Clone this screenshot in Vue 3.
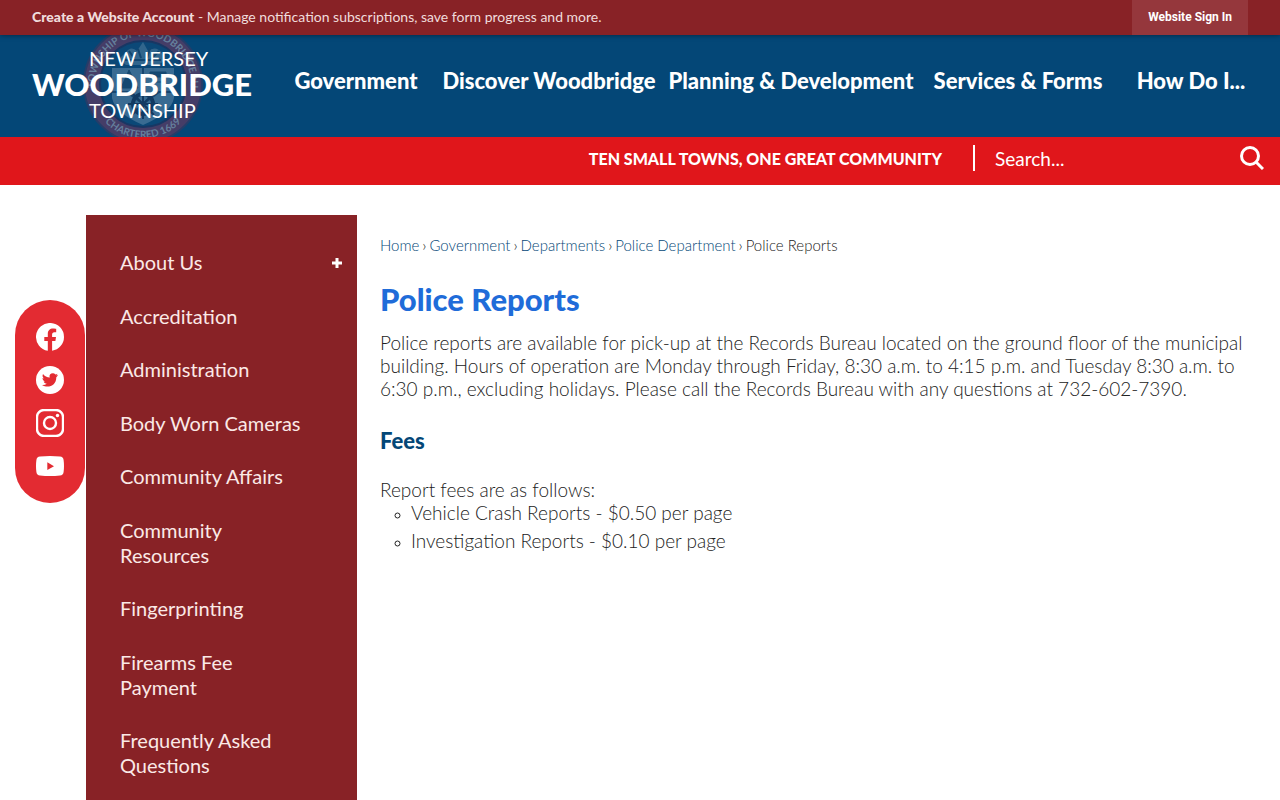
<template>
  <div class="page">
    <div class="account-bar">
      <p class="account-text">
        <a href="#" class="account-link">Create a Website Account</a> - Manage
        notification subscriptions, save form progress and more.
      </p>
      <a href="#" class="sign-in">Website Sign In</a>
    </div>

    <header class="header">
      <a href="#" class="logo" aria-label="New Jersey Woodbridge Township">
        <svg class="seal" viewBox="0 0 120 120" aria-hidden="true">
          <defs>
            <path id="seal-top" d="M15 77A48 48 0 1 1 105 77" />
            <path id="seal-bottom" d="M6 60a54 54 0 0 0 108 0" />
          </defs>
          <circle cx="60" cy="60" r="51" fill="none" stroke="#453d67" stroke-width="16" />
          <circle cx="60" cy="60" r="59" fill="none" stroke="#253d69" stroke-width="2" />
          <circle cx="60" cy="60" r="43" fill="#0b4877" stroke="#183764" stroke-width="2" />
          <path
            d="M42 29q6-8 12-2l6-9 5 9q8-6 14 2l4 7-8 5H43l-7-6z"
            fill="#31658c"
          />
          <path
            d="M46 27l5 7m4-9l3 9m9-10l-3 10m12-7l-8 8M42 36h36"
            fill="none"
            stroke="#124670"
            stroke-width="2"
          />
          <path d="M29 44h62v30q-3 15-31 27Q32 89 29 74z" fill="#396b92" />
          <path d="M29 68h15l16 12 16-12h15M60 44v36" fill="none" stroke="#17466f" stroke-width="2" />
          <path d="M38 64l8-18 9 18zM67 48h16v5H67zM69 58h14" fill="#154871" stroke="#154871" />
          <circle cx="60" cy="80" r="10" fill="none" stroke="#123a62" stroke-width="4" />
          <path
            d="M60 65v30M45 80h30M49 69l22 22M49 91l22-22"
            stroke="#123a62"
            stroke-width="2"
          />
          <text class="seal-text">
            <textPath href="#seal-top" startOffset="50%" text-anchor="middle">
              TOWNSHIP OF WOODBRIDGE NJ
            </textPath>
          </text>
          <text class="seal-text">
            <textPath href="#seal-bottom" startOffset="50%" text-anchor="middle">
              CHARTERED 1669
            </textPath>
          </text>
        </svg>
        <span class="logo-small">NEW JERSEY</span>
        <span class="logo-name">WOODBRIDGE</span>
        <span class="logo-small">TOWNSHIP</span>
      </a>
      <nav class="main-nav" aria-label="Main">
        <a v-for="item in mainNav" :key="item" href="#">{{ item }}</a>
      </nav>
    </header>

    <div class="tagline-bar">
      <strong class="tagline">TEN SMALL TOWNS, ONE GREAT COMMUNITY</strong>
      <form class="search" role="search" @submit.prevent>
        <input v-model="query" type="text" aria-label="Search" placeholder="Search..." />
        <button type="submit" aria-label="Search">
          <svg viewBox="0 0 24 24" width="24" height="24">
            <circle cx="10" cy="10" r="8.5" />
            <path d="M16 16l7 7" />
          </svg>
        </button>
      </form>
    </div>

    <div class="content">
      <nav class="side-nav" aria-label="Police Department">
        <ul>
          <li v-for="item in sideNav" :key="item.label">
            <a href="#">{{ item.label }}</a>
            <button v-if="item.expandable" type="button" :aria-label="`Expand ${item.label}`">
              <svg viewBox="0 0 10 10" width="10" height="10">
                <path d="M5 0v10M0 5h10" />
              </svg>
            </button>
          </li>
        </ul>
      </nav>

      <main class="main">
        <nav class="breadcrumbs" aria-label="Breadcrumb">
          <template v-for="crumb in breadcrumbs" :key="crumb">
            <a href="#">{{ crumb }}</a>
            <span>›</span>
          </template>
          <span>Police Reports</span>
        </nav>
        <h1>Police Reports</h1>
        <p>
          Police reports are available for pick-up at the Records Bureau located
          on the ground floor of the municipal building. Hours of operation are
          Monday through Friday, 8:30 a.m. to 4:15 p.m. and Tuesday 8:30 a.m. to
          6:30 p.m., excluding holidays. Please call the Records Bureau with any
          questions at 732-602-7390.
        </p>
        <h2>Fees</h2>
        <p>Report fees are as follows:</p>
        <ul class="fees">
          <li v-for="fee in fees" :key="fee">{{ fee }}</li>
        </ul>
      </main>
    </div>

    <div class="social">
      <a href="#" aria-label="Facebook">
        <svg viewBox="0 0 28 28">
          <path
            d="M28 14A14 14 0 1 0 11.8 27.8V18H8.3v-4h3.5v-3.1c0-3.5 2.1-5.4 5.3-5.4 1.5 0 3.1.3 3.1.3v3.4h-1.8c-1.7 0-2.3 1.1-2.3 2.2V14H20l-.6 4h-3.3v9.8A14 14 0 0 0 28 14z"
          />
        </svg>
      </a>
      <a href="#" aria-label="Twitter">
        <svg viewBox="0 0 28 28">
          <circle cx="14" cy="14" r="14" />
          <path
            class="cutout"
            d="M22 9.1c-.6.3-1.2.4-1.9.5.7-.4 1.2-1 1.4-1.8-.6.4-1.3.6-2.1.8a3.2 3.2 0 0 0-5.6 3c-2.8-.1-5.2-1.5-6.8-3.5-.9 1.5-.4 3.4 1 4.4-.5 0-1-.2-1.5-.4 0 1.6 1.1 3 2.7 3.3-.5.1-1 .1-1.5 0 .4 1.3 1.6 2.2 3.1 2.3A6.7 6.7 0 0 1 6 19c6.4 4 14.5.2 14.3-7.8.7-.6 1.2-1.2 1.7-2.1z"
          />
        </svg>
      </a>
      <a href="#" aria-label="Instagram">
        <svg viewBox="0 0 28 28">
          <rect class="line" x="1" y="1" width="26" height="26" rx="7" />
          <circle class="line" cx="14" cy="14" r="6" />
          <circle cx="21.5" cy="6.5" r="1.7" />
        </svg>
      </a>
      <a href="#" aria-label="YouTube">
        <svg viewBox="0 0 28 28">
          <path
            d="M4 4.6q10-1 20 0 3.2.2 3.6 3.5.8 6 0 12-.4 3.3-3.6 3.5-10 1-20 0Q.8 23.4.4 20.1q-.8-6 0-12Q.8 4.8 4 4.6z"
          />
          <path class="cutout" d="M11.3 10.3v7.8l6.7-3.9z" />
        </svg>
      </a>
    </div>
  </div>
</template>

<script setup>
import { ref } from "vue";

const query = ref("");

const mainNav = [
  "Government",
  "Discover Woodbridge",
  "Planning & Development",
  "Services & Forms",
  "How Do I...",
];

const sideNav = [
  { label: "About Us", expandable: true },
  { label: "Accreditation" },
  { label: "Administration" },
  { label: "Body Worn Cameras" },
  { label: "Community Affairs" },
  { label: "Community Resources" },
  { label: "Fingerprinting" },
  { label: "Firearms Fee Payment" },
  { label: "Frequently Asked Questions" },
];

const breadcrumbs = ["Home", "Government", "Departments", "Police Department"];

const fees = [
  "Vehicle Crash Reports - $0.50 per page",
  "Investigation Reports - $0.10 per page",
];
</script>

<style>
body {
  margin: 0;
}
</style>

<style scoped>
.page {
  display: flex;
  flex-direction: column;
  min-height: 100vh;
  font-family: Lato, "Liberation Sans", sans-serif;
  font-size: 19px;
  color: #222;
  background: #fff;
}
.page * {
  box-sizing: border-box;
}
a {
  color: inherit;
  text-decoration: none;
}
button {
  display: flex;
  padding: 0;
  border: 0;
  background: none;
  cursor: pointer;
}

/* account bar */
.account-bar {
  display: flex;
  align-items: center;
  justify-content: space-between;
  position: relative;
  z-index: 1;
  height: 35px;
  padding: 0 32px;
  background: #882226;
  color: #f0dcdc;
  box-shadow: 0 0 5px rgba(0, 0, 0, 0.5);
}
.account-text {
  margin: 0;
  font-size: 14px;
  line-height: 32px;
  padding-bottom: 2px;
}
.account-link {
  font-weight: 900;
}
.sign-in {
  padding: 0 16px;
  font-family: Roboto, "Liberation Sans", sans-serif;
  font-size: 12px;
  font-weight: 700;
  line-height: 35px;
  color: #fff;
  background: #95373c;
}

/* header */
.header {
  display: flex;
  height: 102px;
  padding-right: 18px;
  background: #044777;
  color: #fff;
}
.logo {
  display: flex;
  flex-direction: column;
  justify-content: center;
  position: relative;
  width: 280px;
  padding: 0 0 4px 32px;
  overflow: hidden;
}
.seal {
  position: absolute;
  top: -11px;
  left: 83px;
  width: 120px;
  height: 120px;
}
.seal-text {
  font-size: 10px;
  font-weight: 700;
  fill: #66809d;
}
.logo-small,
.logo-name {
  position: relative;
}
.logo-small {
  padding-left: 57px;
  font-size: 20px;
  line-height: 24px;
}
.logo-name {
  font-size: 31px;
  font-weight: 900;
  line-height: 28px;
}
.main-nav {
  flex: 1;
  display: grid;
  grid-template-columns: 152fr 234fr 250fr 204fr 142fr;
  align-items: center;
  padding-bottom: 12px;
  font-size: 22px;
  font-weight: 900;
  text-align: center;
  white-space: nowrap;
}

/* tagline and search */
.tagline-bar {
  display: flex;
  align-items: center;
  justify-content: flex-end;
  height: 48px;
  padding: 0 16px 6px 0;
  background: #e0161b;
  color: #fff;
}
.tagline {
  font-size: 16px;
  font-weight: 900;
}
.search {
  display: flex;
  align-items: center;
  width: 291px;
  height: 26px;
  margin-left: 31px;
  border-left: 2px solid #fff;
}
.search input {
  flex: 1;
  min-width: 0;
  padding: 0 20px;
  border: 0;
  outline: 0;
  background: none;
  color: #fff;
  font: inherit;
}
.search input::placeholder {
  color: #fff;
  opacity: 1;
}
.search svg {
  fill: none;
  stroke: #fff;
  stroke-width: 3;
}

/* page body */
.content {
  flex: 1;
  display: flex;
  padding: 30px 34px 0 86px;
}
.side-nav {
  display: flex;
  flex: 0 0 271px;
  padding: 35px 15px 22px 34px;
  background: #882226;
  color: #fbe9e6;
}
.side-nav ul {
  flex: 1;
  display: flex;
  flex-direction: column;
  justify-content: space-between;
  margin: 0;
  padding: 0;
  list-style: none;
  font-size: 20px;
  line-height: 25px;
}
.side-nav li {
  display: flex;
  align-items: center;
  justify-content: space-between;
}
.side-nav a {
  max-width: 190px;
}
.side-nav button svg {
  fill: none;
  stroke: #fff;
  stroke-width: 3;
}
.main {
  flex: 1;
  padding: 20px 0 0 23px;
  font-weight: 300;
}
.breadcrumbs {
  display: flex;
  flex-wrap: wrap;
  gap: 3px;
  font-size: 15px;
  line-height: 20px;
}
.breadcrumbs a {
  color: #044777;
}
h1 {
  margin: 24px 0 12px;
  font-size: 31px;
  font-weight: 900;
  line-height: 40px;
  color: #1f6cd9;
}
p {
  margin: 0;
  line-height: 23px;
}
h2 {
  margin: 28px 0 24px;
  font-size: 22px;
  font-weight: 900;
  line-height: 26px;
  color: #044777;
}
.fees {
  margin: 0;
  padding-left: 31px;
  list-style: circle;
  line-height: 23px;
}
.fees li {
  margin-bottom: 5px;
}
.fees li::marker {
  font-size: 14px;
}

/* floating social links */
.social {
  position: fixed;
  top: 300px;
  left: 15px;
  display: flex;
  flex-direction: column;
  gap: 15px;
  padding: 23px 21px;
  border-radius: 35px;
  background: #e32b32;
}
.social a {
  display: flex;
}
.social svg {
  width: 28px;
  height: 28px;
  fill: #fff;
}
.social .cutout {
  fill: #e32b32;
}
.social .line {
  fill: none;
  stroke: #fff;
  stroke-width: 2.4;
}
</style>
